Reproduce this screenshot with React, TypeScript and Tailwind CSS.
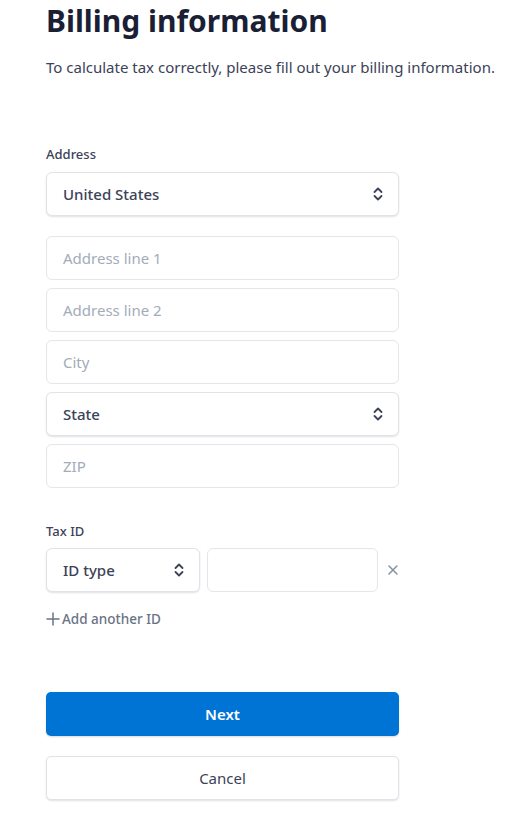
import React from 'react';

const font = { fontFamily: '"Noto Sans", "Open Sans", Arial, sans-serif' };

function Chevrons() {
  return (
    <svg width="12" height="16" viewBox="0 0 12 16" fill="none" stroke="#3c4257" strokeWidth="1.8" strokeLinecap="round" strokeLinejoin="round">
      <path d="M2.5 6 6 2.5 9.5 6" />
      <path d="M2.5 10 6 13.5 9.5 10" />
    </svg>
  );
}

function SelectBox({ label, className }: { label: string; className?: string }) {
  return (
    <div
      className={
        'flex h-[44px] items-center justify-between rounded-[6px] border border-[#e0e3e8] bg-white pl-[16px] pr-[14px] shadow-[0_1px_2px_rgba(0,0,0,0.12)] ' +
        (className ?? '')
      }
    >
      <span className="text-[15px] font-medium text-[#3c4257]">{label}</span>
      <Chevrons />
    </div>
  );
}

function TextBox({ placeholder, className }: { placeholder?: string; className?: string }) {
  return (
    <div
      className={
        'flex h-[44px] items-center rounded-[6px] border border-[#e3e6ea] bg-white px-[16px] ' + (className ?? '')
      }
    >
      <span className="text-[15px] text-[#a3acb9]">{placeholder}</span>
    </div>
  );
}

export default function App() {
  return (
    <div className="min-h-screen bg-white pl-[46px] pr-[20px]" style={font}>
      {/* Header */}
      <h1 className="pt-[1px] text-[30px] font-bold leading-[40px] text-[#1a1f36]">Billing information</h1>
      <p className="mt-[15px] text-[15px] leading-[22px] text-[#3c4257]">
        To calculate tax correctly, please fill out your billing information.
      </p>

      {/* Address */}
      <div className="mt-[67px] w-[353px]">
        <div className="text-[13px] font-medium leading-[18px] text-[#3c4257]">Address</div>
        <div className="mt-[9px] flex flex-col">
          <SelectBox label="United States" />
          <div className="mt-[20px] flex flex-col gap-[8px]">
            <TextBox placeholder="Address line 1" />
            <TextBox placeholder="Address line 2" />
            <TextBox placeholder="City" />
            <SelectBox label="State" />
            <TextBox placeholder="ZIP" />
          </div>
        </div>

        {/* Tax ID */}
        <div className="mt-[34px] text-[13px] font-medium leading-[18px] text-[#3c4257]">Tax ID</div>
        <div className="mt-[8px] flex items-center">
          <SelectBox label="ID type" className="w-[155px]" />
          <TextBox className="ml-[7px] w-[172px]" />
          <svg className="ml-[9px]" width="12" height="12" viewBox="0 0 12 12" stroke="#8792a2" strokeWidth="1.6" strokeLinecap="round">
            <path d="M2 2l8 8M10 2l-8 8" />
          </svg>
        </div>
        <div className="mt-[17px] flex items-center gap-[2px] text-[13.5px] font-medium text-[#697386]">
          <svg width="14" height="14" viewBox="0 0 14 14" stroke="#697386" strokeWidth="1.5" strokeLinecap="round">
            <path d="M7 1v12M1 7h12" />
          </svg>
          <span>Add another ID</span>
        </div>

        {/* Actions */}
        <button className="mt-[63px] flex h-[44px] w-full items-center justify-center rounded-[5px] bg-[#0074d4] text-[15px] font-semibold text-white shadow-[0_1px_2px_rgba(0,0,0,0.15)]">
          Next
        </button>
        <button className="mt-[20px] flex h-[44px] w-full items-center justify-center rounded-[5px] border border-[#e0e3e8] bg-white text-[15px] font-normal text-[#3c4257] shadow-[0_1px_2px_rgba(0,0,0,0.12)]">
          Cancel
        </button>
      </div>
    </div>
  );
}
